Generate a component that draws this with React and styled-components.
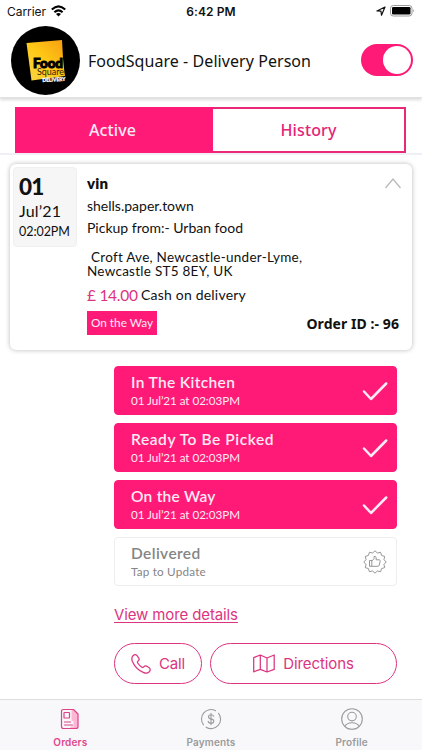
import React from 'react'
import styled, { createGlobalStyle } from 'styled-components'

const pink = '#ff1a78'
const line = '#dc3480'

const GlobalStyle = createGlobalStyle`
  * {
    box-sizing: border-box;
  }
  body {
    margin: 0;
    background: #fff;
    font-family: Lato, sans-serif;
    color: #111;
  }
`

const Screen = styled.div`
  width: 422px;
  height: 750px;
  display: flex;
  flex-direction: column;
  overflow: hidden;
  white-space: nowrap;
`

const StatusBar = styled.div`
  height: 22px;
  padding: 0 7px;
  display: grid;
  grid-template-columns: 1fr auto 1fr;
  align-items: center;
  font-family: Inter, sans-serif;
  font-size: 12px;
`

const Carrier = styled.div`
  display: flex;
  align-items: center;
  gap: 5px;
  letter-spacing: -0.05px;
`

const Time = styled.div`
  font-weight: 600;
  letter-spacing: 0.1px;
`

const StatusIcons = styled.div`
  display: flex;
  justify-content: flex-end;
  align-items: center;
  gap: 4px;
`

const Header = styled.header`
  flex: none;
  height: 76px;
  padding: 4px 9px 3px 11px;
  display: flex;
  align-items: center;
  border-bottom: 1px solid #e2e2e2;
  box-shadow: 0 2px 3px rgba(0, 0, 0, 0.14);
`

const Title = styled.h1`
  flex: 1;
  margin: 2px 0 0 8px;
  font: 400 16px/24px "Noto Sans", sans-serif;
  letter-spacing: 0.06px;
`

const Toggle = styled.button`
  width: 52px;
  height: 32px;
  padding: 2px;
  border: none;
  border-radius: 16px;
  background: ${pink};
  display: flex;
  justify-content: flex-end;
`

const Knob = styled.span`
  width: 28px;
  height: 28px;
  border-radius: 50%;
  background: #fff;
`

const Tabs = styled.div`
  flex: none;
  padding: 9px 16px 0 15px;
  border-bottom: 2px solid #f0eff5;
  height: 57px;
  display: flex;
`

const Tab = styled.button`
  flex: ${({ $active }) => ($active ? '0 0 198px' : '1')};
  height: 46px;
  padding: ${({ $active }) => ($active ? '0 3px 0 0' : '0')};
  border: 2px solid ${({ $active }) => ($active ? pink : '#e92878')};
  border-left-width: ${({ $active }) => ($active ? '2px' : '0')};
  background: ${({ $active }) => ($active ? pink : '#fff')};
  color: ${({ $active }) => ($active ? '#ffeaf4' : '#e32476')};
  font: 500 16px "Noto Sans", sans-serif;
  letter-spacing: 0.12px;
`

const Card = styled.section`
  flex: none;
  height: 186px;
  margin: 9px 10px 0;
  padding: 3px 13px 0 3px;
  display: flex;
  border-radius: 6px;
  background: #fff;
  box-shadow: 0 0 5px rgba(0, 0, 0, 0.28);
`

const DateBox = styled.div`
  width: 64px;
  height: 80px;
  padding: 6px 0 0 5px;
  border-radius: 4px;
  border: 1px solid #f0f0f0;
  background: #f6f6f6;
`

const Day = styled.div`
  font: 900 22.5px/26px Lato, sans-serif;
  letter-spacing: -0.8px;
`

const Month = styled.div`
  font-size: 16px;
  line-height: 22px;
  letter-spacing: 0.15px;
`

const Hour = styled.div`
  font-size: 12.5px;
  line-height: 19px;
  letter-spacing: -0.05px;
`

const Info = styled.div`
  flex: 1;
  margin-left: 10px;
  padding-top: 5px;
`

const InfoTop = styled.div`
  display: flex;
  justify-content: space-between;
  align-items: center;
  height: 23px;
`

const Customer = styled.div`
  padding-bottom: 2px;
  font-size: 15px;
  font-weight: 800;
  letter-spacing: 0.2px;
`

const ChevronSlot = styled.span`
  display: flex;
  margin: 0 -2px 2px 0;
`

const InfoLine = styled.div`
  font-size: 14px;
  line-height: 22px;
`

const Address = styled.div`
  margin-top: 11px;
  font-size: 13.5px;
  line-height: 14px;
  letter-spacing: 0.26px;
  span {
    margin-left: 4px;
  }
`

const Payment = styled.div`
  display: flex;
  gap: 4px;
  margin-top: 6px;
  font-size: 14px;
  line-height: 22px;
  letter-spacing: 0.2px;
`

const Price = styled.span`
  width: 50px;
  color: ${line};
  font-size: 15.5px;
  letter-spacing: -0.28px;
`

const InfoBottom = styled.div`
  display: flex;
  justify-content: space-between;
  margin-top: 5px;
`

const Badge = styled.span`
  width: 70px;
  height: 24px;
  background: ${pink};
  color: #ffeaf4;
  font-size: 11.8px;
  line-height: 23px;
  text-align: center;
`

const OrderId = styled.strong`
  font: 700 14px/25px "Noto Sans", sans-serif;
  letter-spacing: 0.07px;
`

const Details = styled.main`
  flex: 1;
  padding: 16px 25px 0 114px;
`

const Steps = styled.div`
  display: grid;
  gap: 8px;
`

const Step = styled.div`
  height: 49px;
  padding: 0 ${({ $done }) => ($done ? 8 : 9)}px 0 16px;
  display: flex;
  justify-content: space-between;
  align-items: center;
  border-radius: 4px;
  border: 1px solid ${({ $done }) => ($done ? pink : '#efedf0')};
  background: ${({ $done }) => ($done ? pink : '#fff')};
  color: ${({ $done }) => ($done ? '#ffeaf4' : '#858585')};
`

const StepName = styled.div`
  font-size: 15.5px;
  line-height: 19px;
  font-weight: 600;
  letter-spacing: ${({ $spacing }) => $spacing}px;
`

const StepTime = styled.div`
  font-size: 11.7px;
  line-height: 17px;
  letter-spacing: ${({ $done }) => ($done ? -0.06 : 0.2)}px;
`

const MoreLink = styled.a`
  display: inline-block;
  margin-top: 19px;
  color: ${line};
  font: 400 15px/20px Inter, sans-serif;
  letter-spacing: -0.12px;
  text-decoration: underline;
  text-underline-offset: 2px;
`

const Actions = styled.div`
  display: flex;
  gap: 8px;
  margin-top: 18px;
`

const ActionButton = styled.button`
  width: ${({ $width }) => $width}px;
  height: 41px;
  padding: 0;
  display: flex;
  justify-content: center;
  align-items: center;
  gap: 8px;
  border: 1px solid ${line};
  border-radius: 21px;
  background: #fff;
  color: ${line};
  font: 400 15px Inter, sans-serif;
  letter-spacing: -0.1px;
`

const BottomNav = styled.nav`
  flex: none;
  height: 51px;
  display: grid;
  grid-template-columns: repeat(3, 1fr);
  border-top: 1px solid #dedee0;
  background: #f8f8fa;
`

const NavItem = styled.div`
  display: flex;
  flex-direction: column;
  align-items: center;
  padding-top: 8px;
  gap: 5px;
  color: ${({ $active }) => ($active ? '#e0478d' : '#9b9b9d')};
  font: 600 10px/14px Inter, sans-serif;
  letter-spacing: 0.15px;
`

const Logo = () => (
  <svg width="69" height="69" viewBox="0 0 69 69">
    <defs>
      <linearGradient id="gold" x1="0" y1="1" x2="1" y2="0">
        <stop offset="0" stopColor="#f9d548" />
        <stop offset="0.5" stopColor="#ffc816" />
        <stop offset="1" stopColor="#f69d10" />
      </linearGradient>
    </defs>
    <circle cx="34.5" cy="34.5" r="34.5" fill="#000" />
    <path d="M15.500 17L51 14L52 32L53.500 47L54 50L20.500 54.500Z" fill="url(#gold)" />
    <g fontFamily="Lato, sans-serif">
      <text x="22" y="42" fontSize="14" fontWeight="900" fill="#000" stroke="#000" strokeWidth="1" textLength="30" lengthAdjust="spacingAndGlyphs">Food</text>
      <text x="26" y="49.300" fontSize="9" fill="#2b1c00" textLength="27" lengthAdjust="spacingAndGlyphs">Square</text>
      <text x="31.500" y="56" fontSize="5.300" fontWeight="900" fill="#fff" stroke="#fff" strokeWidth="0.300" textLength="23" lengthAdjust="spacingAndGlyphs" transform="rotate(-3 32 55)">DELIVERY</text>
    </g>
  </svg>
)

const Wifi = () => (
  <svg width="15" height="12" viewBox="0 0 15 12" fill="none" stroke="#000" strokeWidth="2.100">
    <path d="M0.800 4.600Q7.500 -1.800 14.200 4.600" />
    <path d="M3.400 7.300Q7.500 3.400 11.600 7.300" />
    <path d="M7.500 11.500L5 8.900Q7.500 6.900 10 8.900Z" fill="#000" stroke="none" />
  </svg>
)

const Location = () => (
  <svg width="10" height="10" viewBox="0 0 10 10" fill="none" stroke="#111" strokeWidth="1.200" strokeLinejoin="round">
    <path d="M9 1L0.900 5L5 5.200L5.500 9.200Z" />
  </svg>
)

const Battery = () => (
  <svg width="25" height="12" viewBox="0 0 25 12">
    <rect x="0.500" y="0.500" width="21.500" height="10.500" rx="2.800" fill="#fff" stroke="#9a9a9a" />
    <rect x="2" y="2" width="18.500" height="7.500" rx="1.300" fill="#000" />
    <path d="M23.200 4q1.800 1.700 0 3.500z" fill="#999" />
  </svg>
)

const Chevron = () => (
  <svg width="16" height="12" viewBox="0 0 16 12" fill="none" stroke="#b9b9b9" strokeWidth="1.300">
    <path d="M0.500 11L8 2L15.500 11" />
  </svg>
)

const Check = () => (
  <svg width="26" height="20" viewBox="0 0 26 20" fill="none" stroke="#ffeaf4" strokeWidth="2.500" strokeLinecap="round" strokeLinejoin="round">
    <path d="M2 10.500L9 18L24.200 2.500" />
  </svg>
)

const sealPoints = Array.from({ length: 24 }, (_, i) => {
  const r = i % 2 ? 9.3 : 11.2
  const a = (i * Math.PI) / 12 - Math.PI / 2
  return `${12 + r * Math.cos(a)},${12 + r * Math.sin(a)}`
}).join(' ')

const Seal = () => (
  <svg width="24" height="24" viewBox="0 0 24 24" fill="none" stroke="#8a8a8a" strokeWidth="0.900" strokeLinejoin="round">
    <polygon points={sealPoints} />
    <path d="M6.500 10.500h2.300v5.800H6.500zM8.800 11l2.200-2.300V6.600q1.600-1 2.100 1v2.200h3.200q1.300.3.800 1.700l-1 4q-.3.800-1.200.8H8.800" />
  </svg>
)

const Phone = () => (
  <svg width="20" height="20" viewBox="0 0 20 20" fill="none" stroke={line} strokeWidth="1.250" strokeLinejoin="round">
    <path d="M2 1.700Q4.200 -.2 5.900 1.400L8 4.500Q8.600 5.900 7.200 6.900Q5.900 7.800 6.700 9Q8.300 11.500 10.900 13.200Q12 14 13 12.700Q14.100 11.300 15.500 12.100L18.500 14.100Q20 15.600 18.300 17.700Q16 20 12.700 18.600Q4.900 15.300 1.400 7.400Q0 4 2 1.700Z" />
  </svg>
)

const MapIcon = () => (
  <svg width="22" height="19" viewBox="0 0 22 19" fill="none" stroke={line} strokeWidth="1.250" strokeLinejoin="round">
    <path d="M0.700 3.600L7.300 1L14 4L21.200 1V15.400L14 18L7.300 15.300L0.700 17.800ZM7.300 1V15.300M14 4V18" />
  </svg>
)

const OrdersIcon = () => (
  <svg width="22" height="22" viewBox="0 0 22 22" fill="none" stroke="#df4289" strokeWidth="1.200" strokeLinejoin="round" strokeLinecap="round">
    <path d="M12.500 2H14.500L19 6V18Q19 20.500 16.500 20.500H11.500V18.500H14.500V13H12.500Z" fill="#ffb5d4" stroke="none" />
    <path d="M4.500 1.500H14.500L19 6V18.500Q19 20.500 17 20.500H4.500Q2.500 20.500 2.500 18.500V3.500Q2.500 1.500 4.500 1.500Z" />
    <rect x="5" y="4.500" width="5.500" height="5.500" rx="0.600" />
    <path d="M5.500 14H11.500M5.500 17H13.500" />
  </svg>
)

const DollarIcon = () => (
  <svg width="22" height="22" viewBox="0 0 22 22" fill="none" stroke="#9b9b9d" strokeWidth="1.100" strokeLinecap="round">
    <path d="M15.500 2.700A9.500 9.500 0 0 0 3.500 16.900M18.600 5.300A9.500 9.500 0 0 1 6.100 19.200" />
    <path d="M13.700 8.300Q13.200 6.700 11 6.700Q8.500 6.700 8.500 8.700Q8.500 10.500 11 10.900Q13.800 11.400 13.800 13.200Q13.800 15.200 11.100 15.200Q8.500 15.200 8.200 13.300M11 5.200V16.700" />
  </svg>
)

const ProfileIcon = () => (
  <svg width="22" height="22" viewBox="0 0 22 22" fill="none" stroke="#9b9b9d" strokeWidth="1.100">
    <circle cx="11" cy="11" r="10.300" />
    <circle cx="11" cy="8.600" r="4.300" />
    <path d="M3.800 18.200Q6.200 14.700 11 14.700Q15.800 14.700 18.200 18.200" />
  </svg>
)

const steps = [
  { name: 'In The Kitchen', time: '01 Jul’21 at 02:03PM', done: true, spacing: 0.35 },
  { name: 'Ready To Be Picked', time: '01 Jul’21 at 02:03PM', done: true, spacing: 0.58 },
  { name: 'On the Way', time: '01 Jul’21 at 02:03PM', done: true, spacing: 0.25 },
  { name: 'Delivered', time: 'Tap to Update', done: false, spacing: 0.4 },
]

const App = () => {
  return (
    <Screen>
      <GlobalStyle />
      <StatusBar>
        <Carrier>Carrier <Wifi /></Carrier>
        <Time>6:42 PM</Time>
        <StatusIcons><Location /><Battery /></StatusIcons>
      </StatusBar>

      <Header>
        <Logo />
        <Title>FoodSquare - Delivery Person</Title>
        <Toggle><Knob /></Toggle>
      </Header>

      <Tabs>
        <Tab $active>Active</Tab>
        <Tab>History</Tab>
      </Tabs>

      <Card>
        <DateBox>
          <Day>01</Day>
          <Month>Jul’21</Month>
          <Hour>02:02PM</Hour>
        </DateBox>
        <Info>
          <InfoTop>
            <Customer>vin</Customer>
            <ChevronSlot><Chevron /></ChevronSlot>
          </InfoTop>
          <InfoLine>shells.paper.town</InfoLine>
          <InfoLine>Pickup from:- Urban food</InfoLine>
          <Address>
            <span>Croft Ave, Newcastle-under-Lyme,</span>
            <br />
            Newcastle ST5 8EY, UK
          </Address>
          <Payment><Price>£ 14.00</Price>Cash on delivery</Payment>
          <InfoBottom>
            <Badge>On the Way</Badge>
            <OrderId>Order ID :- 96</OrderId>
          </InfoBottom>
        </Info>
      </Card>

      <Details>
        <Steps>
          {steps.map((step) => (
            <Step key={step.name} $done={step.done}>
              <div>
                <StepName $spacing={step.spacing}>{step.name}</StepName>
                <StepTime $done={step.done}>{step.time}</StepTime>
              </div>
              {step.done ? <Check /> : <Seal />}
            </Step>
          ))}
        </Steps>
        <MoreLink>View more details</MoreLink>
        <Actions>
          <ActionButton $width={88}><Phone />Call</ActionButton>
          <ActionButton $width={187}><MapIcon />Directions</ActionButton>
        </Actions>
      </Details>

      <BottomNav>
        <NavItem $active><OrdersIcon />Orders</NavItem>
        <NavItem><DollarIcon />Payments</NavItem>
        <NavItem><ProfileIcon />Profile</NavItem>
      </BottomNav>
    </Screen>
  )
}

export default App
